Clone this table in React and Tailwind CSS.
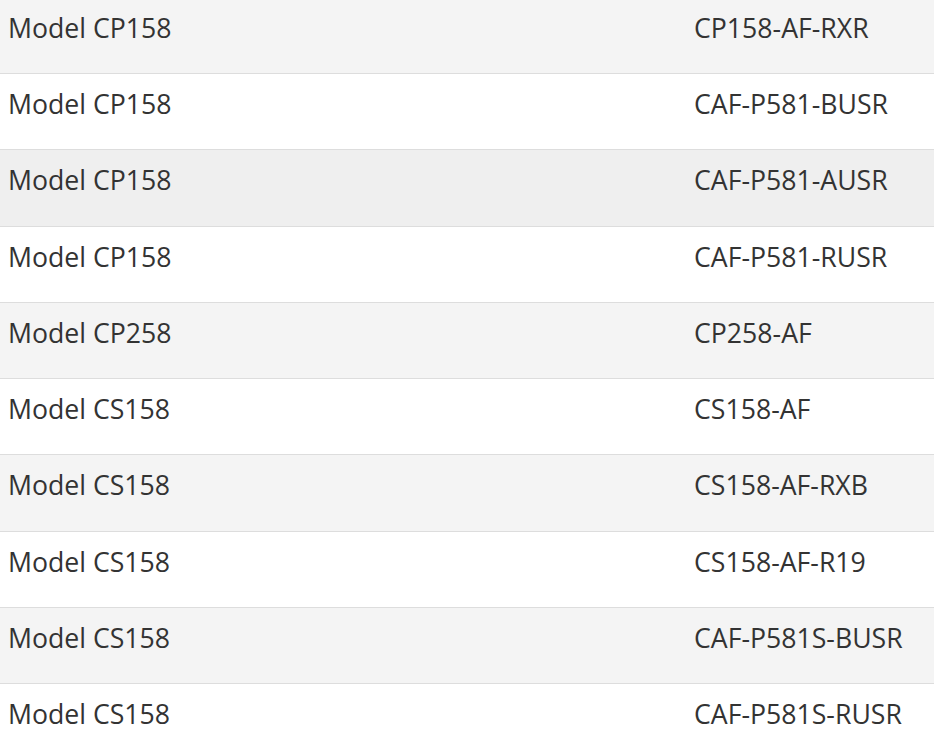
import React from "react";

const rows = [
  ["Model CP158", "CP158-AF-RXR", "bg-[#f4f4f4]"],
  ["Model CP158", "CAF-P581-BUSR", "bg-white"],
  ["Model CP158", "CAF-P581-AUSR", "bg-[#efefef]"],
  ["Model CP158", "CAF-P581-RUSR", "bg-white"],
  ["Model CP258", "CP258-AF", "bg-[#f4f4f4]"],
  ["Model CS158", "CS158-AF", "bg-white"],
  ["Model CS158", "CS158-AF-RXB", "bg-[#f4f4f4]"],
  ["Model CS158", "CS158-AF-R19", "bg-white"],
  ["Model CS158", "CAF-P581S-BUSR", "bg-[#f4f4f4]"],
  ["Model CS158", "CAF-P581S-RUSR", "bg-white"],
];

export default function App() {
  return (
    <div
      className="w-[934px] h-[747px] overflow-hidden bg-white text-[#333333] text-[26.67px] leading-[40px]"
      style={{ fontFamily: '"Open Sans", sans-serif' }}
    >
      <div className="mt-[-2.25px]">
        {rows.map(([a, b, bg], i) => (
          <div
            key={i}
            className={`grid grid-cols-[686px_1fr] h-[76.25px] border-b border-[#dddddd] ${bg}`}
          >
            <div className="pl-[8px] pt-[10px] whitespace-nowrap">{a}</div>
            <div className="pl-[8px] pt-[10px] whitespace-nowrap">{b}</div>
          </div>
        ))}
      </div>
    </div>
  );
}
